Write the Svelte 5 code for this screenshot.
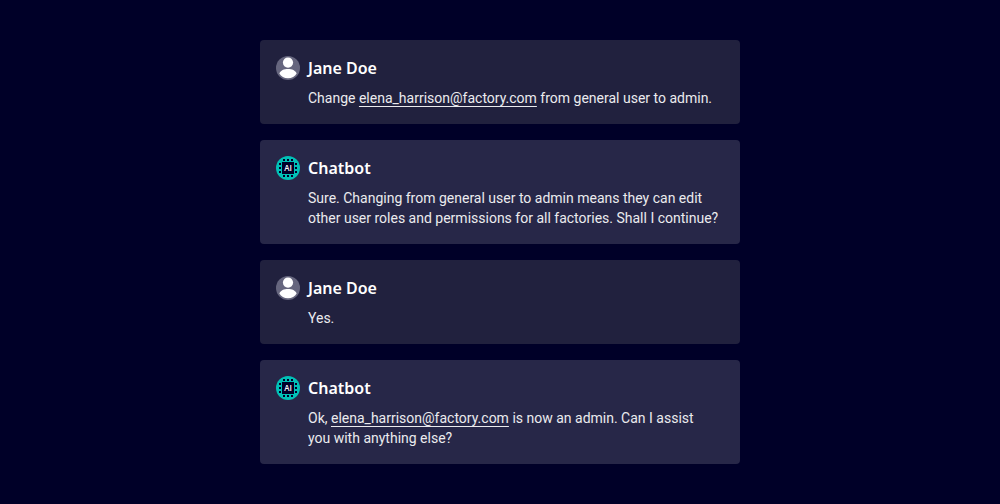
<script>
  const address = 'elena_harrison@factory.com';
  const messages = [
    { bot: false, name: 'Jane Doe', before: 'Change ', email: address, after: ' from general user to admin.' },
    {
      bot: true,
      name: 'Chatbot',
      before:
        'Sure. Changing from general user to admin means they can edit\nother user roles and permissions for all factories. Shall I continue?'
    },
    { bot: false, name: 'Jane Doe', before: 'Yes.' },
    { bot: true, name: 'Chatbot', before: 'Ok, ', email: address, after: ' is now an admin. Can I assist\nyou with anything else?' }
  ];
  const pins = [7, 11, 15];
</script>

<main>
  {#each messages as message}
    <article class:bot={message.bot}>
      <header>
        {#if message.bot}
          <svg viewBox="0 0 24 24" aria-hidden="true">
            <circle cx="12" cy="12" r="12" fill="#00c1b6" />
            <g fill="#000028">
              <rect x="6" y="6" width="12" height="12" />
              {#each pins as p}
                <rect x={p} y="3" width="2" height="2" />
                <rect x={p} y="19" width="2" height="2" />
                <rect x="3" y={p} width="2" height="2" />
                <rect x="19" y={p} width="2" height="2" />
              {/each}
            </g>
            <text x="12" y="15" text-anchor="middle">AI</text>
          </svg>
        {:else}
          <svg viewBox="0 0 24 24" aria-hidden="true">
            <circle cx="12" cy="12" r="12" fill="#66667e" />
            <circle cx="12" cy="6.600" r="5.100" fill="#fff" />
            <path d="M3.400 17.400C4.600 14.400 8 13 12 13s7.400 1.400 8.600 4.400C19 20.500 15.800 22.200 12 22.200S5 20.500 3.400 17.400z" fill="#fff" />
          </svg>
        {/if}
        <h2>{message.name}</h2>
      </header>
      <p>{message.before}{#if message.email}<a href="mailto:{message.email}">{message.email}</a>{message.after}{/if}</p>
    </article>
  {/each}
</main>

<style>
  :global(body) {
    background: #000028;
  }
  main {
    box-sizing: border-box;
    max-width: 512px;
    margin: 0 auto;
    padding: 40px 16px;
    display: flex;
    flex-direction: column;
    gap: 16px;
    font-family: Roboto, sans-serif;
    color: #fff;
  }
  article {
    padding: 16px;
    border-radius: 4px;
    background: #21213e;
  }
  article.bot {
    background: #272748;
  }
  header {
    display: flex;
    align-items: center;
    gap: 8px;
  }
  svg {
    width: 24px;
    height: 24px;
    flex: none;
  }
  text {
    font-family: 'Open Sans', sans-serif;
    font-size: 8px;
    font-weight: 600;
    fill: #fff;
  }
  h2 {
    margin: 0;
    font-family: 'Noto Sans', sans-serif;
    font-size: 16px;
    line-height: 24px;
    font-weight: 600;
  }
  p {
    margin: 8px 0 0 32px;
    font-size: 14px;
    line-height: 20px;
    color: #ebebee;
    white-space: pre-line;
  }
  a {
    color: inherit;
    text-decoration: underline;
    text-decoration-thickness: 1px;
    text-underline-offset: 3px;
    text-decoration-skip-ink: none;
  }
</style>
